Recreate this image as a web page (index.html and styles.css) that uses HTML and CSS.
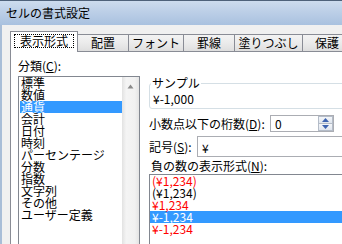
FILE: index.html
```html
<!DOCTYPE html>
<html lang="ja">
<head>
  <meta charset="UTF-8" />
  <title>セルの書式設定</title>
  <link rel="stylesheet" href="styles.css">
</head>
<body>
  <div class="window">
    <div class="titlebar">セルの書式設定</div>
    <div class="client">
      <div class="tabs">
        <div class="tab active"><span class="focus">表示形式</span></div>
        <div class="tab tab-align">配置</div>
        <div class="tab tab-font">フォント</div>
        <div class="tab tab-border">罫線</div>
        <div class="tab tab-fill">塗りつぶし</div>
        <div class="tab tab-protect">保護</div>
      </div>

      <div class="panel">
        <div class="category">
          <div class="label">分類(<u>C</u>):</div>
          <div class="listbox cat-list">
            <ul class="items">
              <li>標準</li>
              <li>数値</li>
              <li class="selected">通貨</li>
              <li>会計</li>
              <li>日付</li>
              <li>時刻</li>
              <li>パーセンテージ</li>
              <li>分数</li>
              <li>指数</li>
              <li>文字列</li>
              <li>その他</li>
              <li>ユーザー定義</li>
            </ul>
            <div class="vscroll">
              <svg class="scroll-arrow" width="7" height="5" viewBox="0 0 7 5"><path d="M3.5 0.5 L6.5 4.5 L0.5 4.5 Z" fill="#8a8a8a"/></svg>
            </div>
          </div>
        </div>

        <div class="options">
          <fieldset class="sample">
            <legend>サンプル</legend>
            <div class="sample-value">¥-1,000</div>
          </fieldset>

          <div class="row decimals">
            <label>小数点以下の桁数(<u>D</u>):</label>
            <div class="spin">
              <span class="spin-value">0</span>
              <div class="spin-btns">
                <span class="spin-btn"><svg width="7" height="4" viewBox="0 0 7 4"><path d="M3.5 0 L7 4 L0 4 Z" fill="#3d63b0"/></svg></span>
                <span class="spin-btn"><svg width="7" height="4" viewBox="0 0 7 4"><path d="M0 0 L7 0 L3.5 4 Z" fill="#3d63b0"/></svg></span>
              </div>
            </div>
          </div>

          <div class="row symbol">
            <label>記号(<u>S</u>):</label>
            <div class="combo">¥</div>
          </div>

          <div class="label neg-label">負の数の表示形式(<u>N</u>):</div>
          <div class="listbox neg-list">
            <ul class="items">
              <li class="red">(¥1,234)</li>
              <li>(¥1,234)</li>
              <li class="red">¥1,234</li>
              <li class="selected">¥-1,234</li>
              <li class="red">¥-1,234</li>
            </ul>
          </div>
        </div>
      </div>
    </div>
  </div>
</body>
</html>
```

FILE: styles.css
```css
body {
  margin: 0;
  width: 342px;
  height: 244px;
  overflow: hidden;
  background: #fff;
  font-family: "Noto Sans CJK JP", "Noto Sans", sans-serif;
  font-size: 12px;
  line-height: 12px;
  color: #000;
}

.window {
  width: 380px;
  height: 270px;
}

.titlebar {
  box-sizing: border-box;
  height: 25px;
  padding: 6px 0 0 6px;
  border-top: 1px solid #4f627a;
  background: linear-gradient(#cddcee, #bccfe7 45%, #a9c1df);
  color: #000;
}

.client {
  height: 100%;
  border-left: 2px solid #a8bdd7;
  background: #f0f0f0;
  padding: 6px 0 0 8px;
}

/* tabs */
.tabs {
  display: flex;
  align-items: flex-end;
}

.tab {
  box-sizing: border-box;
  height: 17px;
  padding-top: 2px;
  margin-left: -1px;
  border: 1px solid #898c95;
  border-bottom: none;
  background: linear-gradient(#f3f3f3, #ebebeb 50%, #dedede);
  text-align: center;
}

.tab.active {
  position: relative;
  z-index: 1;
  width: 68px;
  height: 21px;
  margin-left: 0;
  margin-bottom: -1px;
  padding-top: 2px;
  background: #fff;
}

.focus {
  display: inline-block;
  padding: 0 5px;
  border: 1px dotted #000;
}

.tab-align { width: 52px; }
.tab-font { width: 56px; }
.tab-border { width: 52px; }
.tab-fill { width: 69px; }
.tab-protect { width: 50px; }

/* page */
.panel {
  display: flex;
  gap: 9px;
  height: 220px;
  padding: 8px 0 0 7px;
  border-top: 1px solid #898c95;
  border-left: 1px solid #898c95;
  background: #fff;
}

.category {
  width: 122px;
}

.label {
  height: 12px;
}

u {
  text-decoration: underline;
  text-underline-offset: 1px;
}

.listbox {
  box-sizing: border-box;
  border: 1px solid #828790;
  background: #fff;
}

.items {
  margin: 0;
  padding: 0;
  list-style: none;
}

.items li {
  height: 12px;
  white-space: nowrap;
}

.items li.selected {
  background: #3399ff;
  color: #fff;
}

.cat-list {
  display: flex;
  height: 180px;
  margin-top: 4px;
}

.cat-list .items {
  flex: 1;
  padding-left: 1px;
}

.cat-list li {
  padding-left: 1px;
}

.vscroll {
  width: 17px;
  background: linear-gradient(to right, #e2e2e2, #f4f4f4 25%, #f1f1f1 75%, #e4e4e4);
}

.scroll-arrow {
  display: block;
  margin: 7px 0 0 5px;
}

/* right side */
.options {
  width: 200px;
  padding-top: 17px;
}

.sample {
  margin: 0;
  padding: 4px 2px 3px 2px;
  border: 1px solid #d5dfe5;
  border-radius: 3px;
}

.sample legend {
  padding: 0 1px;
  margin-left: -1px;
  line-height: 12px;
}

.sample-value {
  padding-left: 1px;
}

.row {
  display: flex;
  align-items: center;
}

.decimals {
  margin-top: 6px;
}

.decimals label {
  width: 121px;
}

.spin {
  box-sizing: border-box;
  display: flex;
  align-items: center;
  width: 64px;
  height: 17px;
  border: 1px solid #abadb3;
}

.spin-value {
  flex: 1;
  padding-left: 4px;
}

.spin-btns {
  display: flex;
  flex-direction: column;
  width: 15px;
  height: 15px;
}

.spin-btn {
  display: flex;
  align-items: center;
  justify-content: center;
  flex: 1;
  border: 1px solid #b4bcc8;
  background: linear-gradient(#f4f6f9, #dfe5ee);
}

.spin-btn + .spin-btn {
  border-top: none;
}

.symbol {
  margin-top: 4px;
}

.symbol label {
  width: 48px;
}

.combo {
  box-sizing: border-box;
  flex: 1;
  height: 21px;
  padding: 5px 0 0 4px;
  border: 1px solid #abadb3;
}

.neg-label {
  margin-top: 3px;
  padding-left: 2px;
}

.neg-list {
  height: 80px;
  margin-top: 2px;
}

.neg-list li {
  padding-left: 2px;
}

.items li.red {
  color: #ff0000;
}
```
